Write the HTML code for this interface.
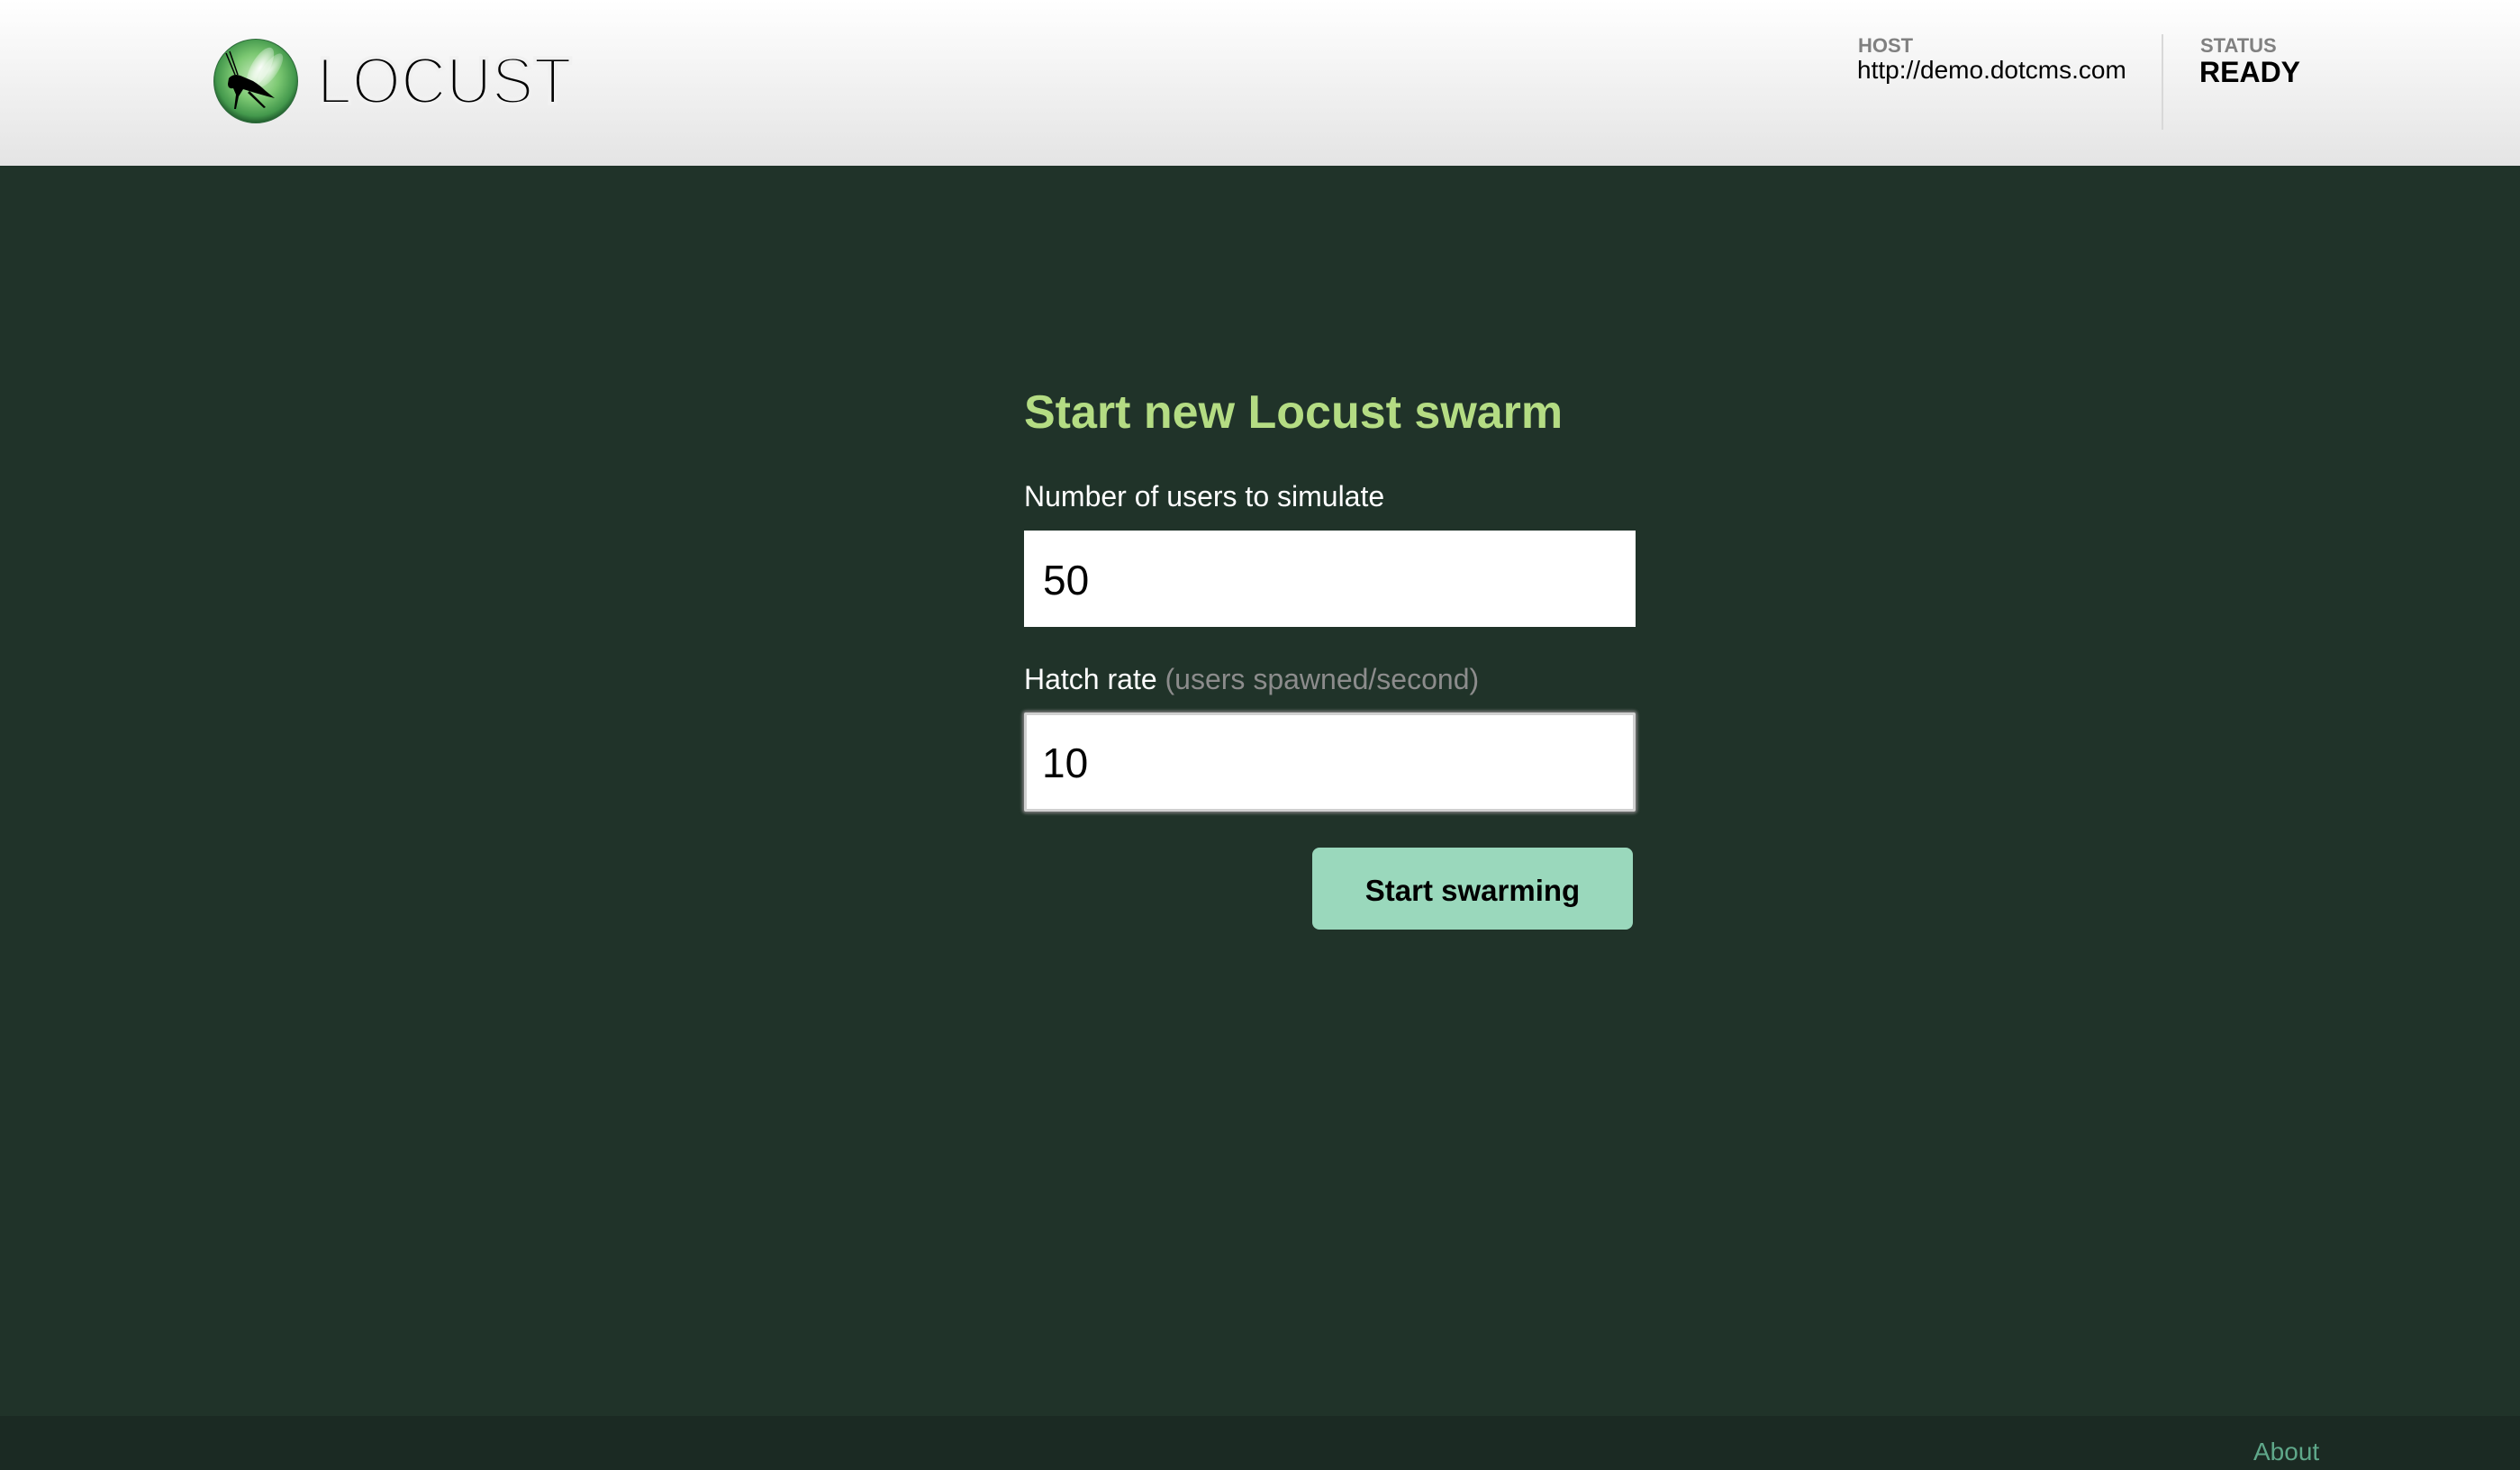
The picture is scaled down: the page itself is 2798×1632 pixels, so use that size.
<!DOCTYPE html>
<html><head><meta charset="utf-8"><style>
*{margin:0;padding:0;box-sizing:border-box}
html,body{width:2798px;height:1632px;overflow:hidden;background:#203329;font-family:"Liberation Sans",Arial,sans-serif}
.hdr{position:absolute;left:0;top:0;width:2798px;height:184px;background:linear-gradient(#ffffff,#e4e4e4)}
.a{position:absolute;white-space:nowrap;line-height:1}
.foot{position:absolute;left:0;top:1572px;width:2798px;height:60px;background:#1b2a23}
.inp{position:absolute;left:1137px;width:679px;background:#fff}
</style></head><body>
<div class="hdr">
<svg style="position:absolute;left:237px;top:43px" width="94" height="94" viewBox="0 0 94 94">
<defs>
<radialGradient id="g" cx="0.5" cy="0.45" r="0.55">
<stop offset="0" stop-color="#c8ecbe"/><stop offset="0.5" stop-color="#7cc872"/><stop offset="0.85" stop-color="#43984c"/><stop offset="1" stop-color="#1f5a2c"/>
</radialGradient>
<radialGradient id="w" cx="0.5" cy="0.5" r="0.5"><stop offset="0" stop-color="#fff" stop-opacity="0.95"/><stop offset="1" stop-color="#fff" stop-opacity="0.3"/></radialGradient>
</defs>
<circle cx="47" cy="47" r="46.5" fill="url(#g)" stroke="#2d6a3a" stroke-width="1"/>
<ellipse cx="52" cy="32" rx="10" ry="25" transform="rotate(30 52 32)" fill="url(#w)"/>
<ellipse cx="63" cy="35" rx="8" ry="22" transform="rotate(35 63 35)" fill="url(#w)" opacity="0.8"/>
<path d="M14 16 L24 40 M18 14 L27 40" stroke="#000" stroke-width="1.5" fill="none"/>
<path d="M17 44 Q22 38 30 41 L44 47 Q52 52 58 58 L68 66 L60 64 L46 60 L33 56 L28 64 L25 78 L23 78 L25 62 L22 55 Q16 56 16 50 Z" fill="#000"/>
<path d="M40 58 L58 76 L56 77 L38 60 Z" fill="#000"/>
</svg>
<svg style="position:absolute;left:350px;top:50px" width="300" height="75">
<text x="2" y="65" font-family="Liberation Sans, Arial, sans-serif" font-size="73" textLength="283" lengthAdjust="spacingAndGlyphs" fill="#000">LOCUST</text>
<text x="2" y="65" font-family="Liberation Sans, Arial, sans-serif" font-size="73" textLength="283" lengthAdjust="spacingAndGlyphs" fill="none" stroke="#f1f1f1" stroke-width="4">LOCUST</text>
</svg>
<div class="a" style="left:2063px;top:40px;font-size:22px;font-weight:bold;color:#808080">HOST</div>
<div class="a" style="left:2062px;top:64px;font-size:28px;color:#000">http://demo.dotcms.com</div>
<div style="position:absolute;left:2400px;top:38px;width:2px;height:106px;background:#d8d8d8"></div>
<div class="a" style="left:2443px;top:40px;font-size:22px;font-weight:bold;color:#808080">STATUS</div>
<div class="a" style="left:2442px;top:64px;font-size:32px;font-weight:bold;color:#000">READY</div>
</div>

<div class="a" style="left:1137px;top:432px;font-size:52px;font-weight:bold;color:#b4dc83">Start new Locust swarm</div>
<div class="a" style="left:1137px;top:535px;font-size:32px;color:#fff">Number of users to simulate</div>
<div class="inp" style="top:589px;height:107px"></div>
<div class="a" style="left:1158px;top:621px;font-size:46px;color:#000">50</div>
<div class="a" style="left:1137px;top:738px;font-size:32px;color:#fff">Hatch rate <span style="color:#8c8c8c">(users spawned/second)</span></div>
<div class="inp" style="top:791px;height:110px;border:3px solid #d0d0d0;box-shadow:0 0 3px 2px #7a7a7a;border-radius:2px"></div>
<div class="a" style="left:1157px;top:824px;font-size:46px;color:#000">10</div>
<div style="position:absolute;left:1457px;top:941px;width:356px;height:91px;background:#9ad8bc;border-radius:8px"></div>
<div class="a" style="left:1457px;width:356px;text-align:center;top:972px;font-size:33px;font-weight:bold;color:#000">Start swarming</div>

<div class="foot"></div>
<div class="a" style="left:2502px;top:1598px;font-size:28px;color:#5fa88a">About</div>
</body></html>
